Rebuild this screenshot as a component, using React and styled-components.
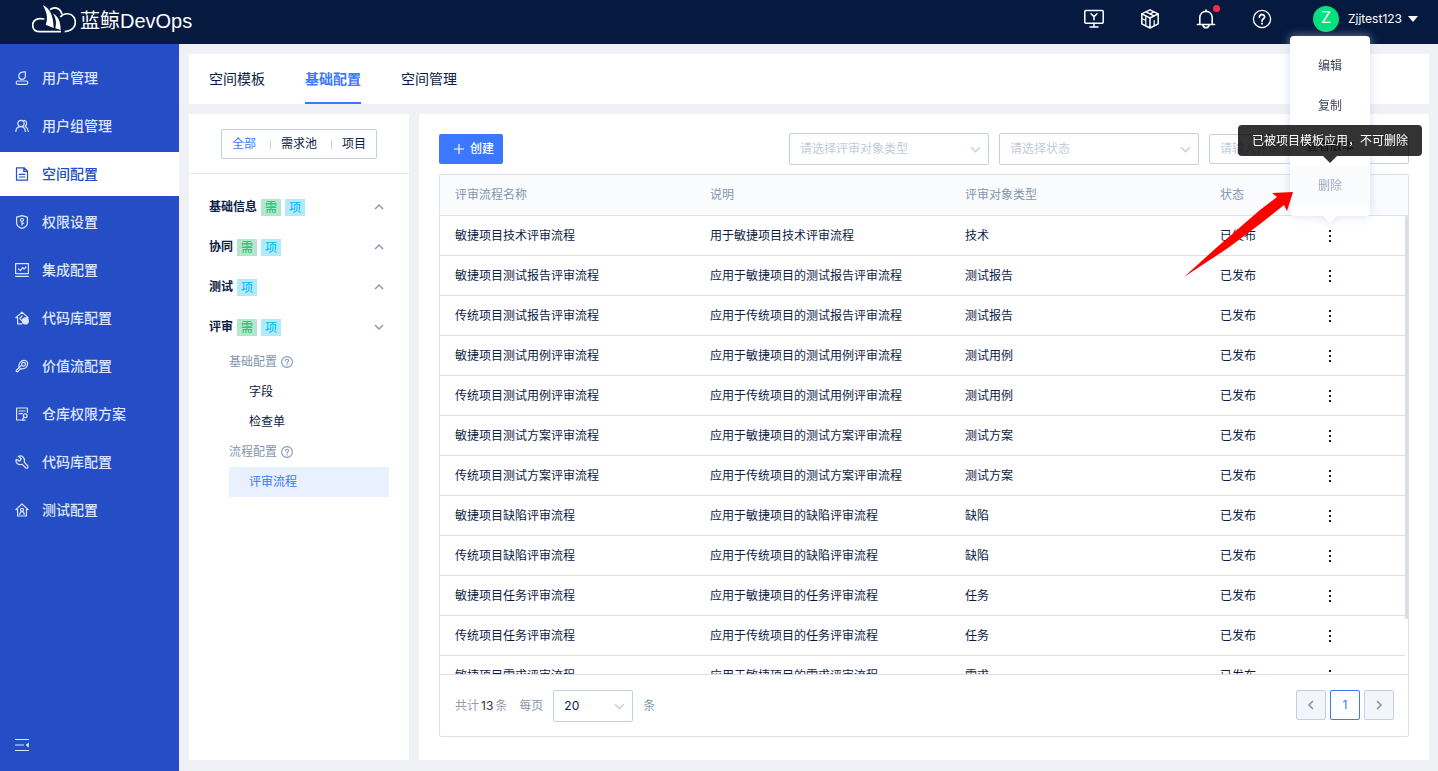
import React from "react";
import styled, { createGlobalStyle, css } from "styled-components";

const ink = "#0b1b45";
const blue = "#3c77ff";
const muted = "#8496ae";
const line = "#dde0e6";
const field = "#c4d0de";

const Global = createGlobalStyle`
  *, *::before, *::after { box-sizing: border-box; }
  body {
    margin: 0;
    font-family: Inter, "Noto Sans CJK SC", sans-serif;
    font-size: 12px;
    line-height: 18px;
    color: ${ink};
    background: #f0f1f5;
  }
  button, input, select { font: inherit; color: inherit; margin: 0; }
  button { border: 0; background: none; padding: 0; cursor: pointer; }
  ul { list-style: none; margin: 0; padding: 0; }
  a { color: inherit; text-decoration: none; }
  svg { display: block; flex: none; }
`;

/* ---------- shell ---------- */
const Shell = styled.div`
  position: relative;
  display: flex;
  flex-direction: column;
  height: 100vh;
  min-height: 480px;
`;
const Header = styled.header`
  display: flex;
  align-items: center;
  justify-content: space-between;
  flex: none;
  height: 44px;
  padding: 0 20px 6px 32px;
  background: #06193f;
  color: #fff;
`;
const Brand = styled.a`
  display: flex;
  align-items: center;
  gap: 4px;
`;
const BrandName = styled.span`
  padding-top: 4px;
  font-family: "Liberation Sans", "Noto Sans CJK SC", sans-serif;
  font-size: 20px;
  line-height: 28px;
`;
const HeaderTools = styled.div`
  display: flex;
  align-items: center;
  gap: 36px;
`;
const ToolButton = styled.button`
  position: relative;
  display: flex;
`;
const Dot = styled.span`
  position: absolute;
  top: -4px;
  right: -4px;
  width: 7px;
  height: 7px;
  border-radius: 50%;
  background: #fb2b44;
`;
const UserButton = styled.button`
  display: flex;
  align-items: center;
  gap: 6px;
  margin-left: 5px;
`;
const Avatar = styled.span`
  width: 26px;
  height: 26px;
  margin-right: 3px;
  border-radius: 50%;
  background: #04e07d;
  font-size: 16px;
  line-height: 23px;
  text-align: center;
`;
const Body = styled.div`
  display: flex;
  flex: 1;
  min-height: 0;
`;

/* ---------- sidebar ---------- */
const Sidebar = styled.nav`
  display: flex;
  flex-direction: column;
  justify-content: space-between;
  flex: none;
  width: 179px;
  padding: 12px 0 18px;
  background: #244dc6;
  color: #dce5fb;
`;
const NavList = styled.ul`
  display: flex;
  flex-direction: column;
  gap: 4px;
`;
const NavLink = styled.a`
  display: flex;
  align-items: center;
  gap: 12px;
  height: 44px;
  padding-left: 14px;
  font-size: 14px;
  font-weight: 500;
  ${(p) => p.$active && css`
    background: #fff;
    color: #244dc6;
  `}
`;
const CollapseButton = styled.button`
  align-self: flex-start;
  margin-left: 14px;
`;

/* ---------- main ---------- */
const Main = styled.main`
  display: flex;
  flex-direction: column;
  gap: 10px;
  flex: 1;
  min-width: 0;
  padding: 10px 9px 11px 10px;
`;
const Tabs = styled.nav`
  display: flex;
  gap: 40px;
  flex: none;
  height: 50px;
  padding: 0 20px;
  background: #fff;
`;
const Tab = styled.a`
  border-bottom: 2px solid ${(p) => (p.$active ? blue : "transparent")};
  color: ${(p) => (p.$active ? blue : ink)};
  font-size: 14px;
  font-weight: ${(p) => (p.$active ? 700 : 400)};
  line-height: 50px;
`;
const Columns = styled.div`
  display: flex;
  gap: 10px;
  flex: 1;
  min-height: 0;
`;
const TreePanel = styled.aside`
  flex: none;
  width: 220px;
  background: #fff;
`;
const ScopeBar = styled.div`
  display: flex;
  justify-content: center;
  height: 60px;
  padding-top: 15px;
  border-bottom: 1px solid #e8eaf0;
`;
const Segments = styled.div`
  display: flex;
  align-items: center;
  height: 30px;
  padding: 0 10px;
  border: 1px solid ${field};
  border-radius: 2px;
`;
const Segment = styled.button`
  display: flex;
  align-items: center;
  color: ${(p) => (p.$active ? blue : ink)};
  &:not(:first-child)::before {
    content: "";
    width: 1px;
    height: 9px;
    margin: 0 10px 0 14px;
    background: ${field};
  }
`;
const Tree = styled.div`
  padding-top: 13px;
`;
const GroupHead = styled.button`
  display: flex;
  align-items: center;
  gap: 4px;
  width: 100%;
  height: 40px;
  padding: 0 25px 0 20px;
  font-weight: 700;
  svg { margin-left: auto; }
`;
const Tag = styled.span`
  padding: 0 4px;
  font-weight: 400;
  line-height: 17px;
  background: ${(p) => (p.$kind === "需" ? "#b1e8cd" : "#b2eafb")};
  color: ${(p) => (p.$kind === "需" ? "#14bd68" : "#00b6ee")};
`;
const Branch = styled.div`
  margin: 0 20px 0 40px;
`;
const BranchTitle = styled.div`
  display: flex;
  align-items: center;
  gap: 4px;
  height: 30px;
  color: ${muted};
`;
const Leaf = styled.a`
  display: block;
  padding-left: 20px;
  line-height: 30px;
  ${(p) => p.$active && css`
    background: #e9f0ff;
    color: ${blue};
  `}
`;

/* ---------- list panel ---------- */
const ListPanel = styled.section`
  display: flex;
  flex-direction: column;
  gap: 9px;
  flex: 1;
  min-width: 0;
  padding: 19px 20px 23px;
  background: #fff;
`;
const Toolbar = styled.div`
  display: flex;
  align-items: center;
  gap: 10px;
`;
const CreateButton = styled.button`
  display: flex;
  align-items: center;
  gap: 6px;
  height: 30px;
  margin-right: auto;
  padding: 0 9px 0 15px;
  border-radius: 2px;
  background: ${blue};
  color: #fff;
  font-weight: 500;
`;
const SelectBox = styled.span`
  position: relative;
  width: ${(p) => p.$width};
  svg {
    position: absolute;
    top: 11px;
    right: 8px;
    pointer-events: none;
  }
`;
const Select = styled.select`
  display: block;
  width: 100%;
  height: 32px;
  padding: 0 10px;
  appearance: none;
  border: 1px solid ${field};
  border-radius: 2px;
  background: #fff;
  color: ${(p) => (p.$empty ? "#c0ccda" : ink)};
`;
const SearchBox = styled.label`
  display: flex;
  align-items: center;
  width: 200px;
  height: 30px;
  padding: 0 10px;
  border: 1px solid ${field};
  border-radius: 2px;
`;
const SearchInput = styled.input`
  flex: 1;
  min-width: 0;
  padding: 0;
  border: 0;
  outline: 0;
  background: none;
  &::placeholder { color: #c0ccda; }
`;
const TableCard = styled.div`
  display: flex;
  flex-direction: column;
  flex: 1;
  min-height: 0;
  border: 1px solid ${line};
  border-radius: 2px;
`;
const TableArea = styled.div`
  position: relative;
  flex: 1;
  min-height: 0;
`;
const TableScroll = styled.div`
  height: 100%;
  overflow-y: auto;
  scrollbar-width: none;
`;
const ScrollTrack = styled.div`
  position: absolute;
  top: 41px;
  right: 0;
  bottom: 0;
  width: 3px;
  background: #fff;
`;
const ScrollThumb = styled.div`
  height: 88%;
  border-radius: 1px;
  background: #d9dee5;
`;
const Table = styled.table`
  width: 100%;
  table-layout: fixed;
  border-collapse: separate;
  border-spacing: 0;
  text-align: left;
`;
const Th = styled.th`
  position: sticky;
  top: 0;
  width: ${(p) => p.$width};
  height: 41px;
  padding: 0 15px;
  border-bottom: 1px solid ${line};
  background: #fafbfd;
  color: ${muted};
  font-weight: 400;
`;
const Td = styled.td`
  height: 40px;
  padding: 0 15px;
  border-bottom: 1px solid ${line};
`;
const MoreButton = styled.button`
  display: flex;
  flex-direction: column;
  align-items: center;
  gap: 3px;
  width: 20px;
  i {
    width: 2px;
    height: 2px;
    background: ${ink};
  }
`;
const Pager = styled.footer`
  display: flex;
  align-items: flex-start;
  justify-content: space-between;
  height: 62px;
  padding: 15px 14px 0 15px;
  border-top: 1px solid ${line};
`;
const PageSize = styled.div`
  display: flex;
  align-items: center;
  gap: 10px;
  color: ${muted};
`;
const Total = styled.span`
  margin-right: 2px;
  color: #979bb0;
  b {
    margin: 0 2px;
    color: #333;
    font-weight: 400;
  }
`;
const Pages = styled.div`
  display: flex;
  gap: 4px;
`;
const PageButton = styled.button`
  display: flex;
  align-items: center;
  justify-content: center;
  width: 30px;
  height: 30px;
  border: 1px solid ${(p) => (p.$current ? blue : field)};
  border-radius: 2px;
  background: ${(p) => (p.$current ? "#fff" : "#f2f6fa")};
  color: ${(p) => (p.$current ? blue : muted)};
`;

/* ---------- overlays ---------- */
const Menu = styled.div`
  position: absolute;
  top: 36px;
  right: 68px;
  display: flex;
  flex-direction: column;
  width: 80px;
  padding: 10px 0;
  border-radius: 4px;
  background: #fff;
  filter: drop-shadow(0 0 5px rgba(190, 200, 220, 0.6));
  &::after {
    content: "";
    position: absolute;
    top: 100%;
    left: 33px;
    border: 7px solid transparent;
    border-top-color: #fff;
    border-bottom: 0;
  }
`;
const MenuItem = styled.button`
  height: 40px;
  color: #3f4658;
  &:disabled {
    background: #fafbfd;
    color: #a0adc0;
  }
`;
const Tooltip = styled.div`
  position: absolute;
  top: 125px;
  right: 16px;
  padding: 0 14px;
  border-radius: 4px;
  background: rgba(0, 0, 0, 0.8);
  color: #fff;
  line-height: 31px;
  white-space: nowrap;
  &::after {
    content: "";
    position: absolute;
    top: 100%;
    left: 85px;
    border: 7px solid transparent;
    border-top-color: rgba(0, 0, 0, 0.8);
    border-bottom: 0;
  }
`;
const Pointer = styled.svg`
  position: absolute;
  top: 190px;
  right: 144px;
`;

/* ---------- drawings ---------- */
const Icon = ({ size = 14, box = 14, w = 1, children }) => (
  <svg width={size} height={size} viewBox={`0 0 ${box} ${box}`} fill="none" stroke="currentColor"
    strokeWidth={w} strokeLinecap="round" strokeLinejoin="round" aria-hidden="true">
    {children}
  </svg>
);

const Logo = () => (
  <svg width="44" height="28" viewBox="96 14 132 84" fill="none" stroke="#fff" strokeWidth="5" aria-hidden="true">
    <path d="M183 94H120C105 94 98 85 98 74C98 61 110 51 133 56" />
    <path d="M150 28C160 20 180 19 186 42" strokeWidth="5" />
    <path d="M181 50C192 36 214 37 223 53C230 68 225 92 194 94" />
    <path d="M128 14C150 25 160 45 161 83L137 73C144 55 142 37 128 14Z" fill="#fff" stroke="none" />
    <path d="M158 39C175 48 182 64 182 89L166 84C170 67 168 53 158 39Z" fill="#fff" stroke="none" />
  </svg>
);

const Chevron = ({ dir = "down", size = 10, color = muted, w = 1.4 }) => {
  const d = {
    down: "M1 3L5 7L9 3",
    up: "M1 7L5 3L9 7",
    left: "M7 1L3 5L7 9",
    right: "M3 1L7 5L3 9",
  }[dir];
  return (
    <svg width={size} height={size} viewBox="0 0 10 10" fill="none" stroke={color} strokeWidth={w} aria-hidden="true">
      <path d={d} />
    </svg>
  );
};

const Help = ({ size = 12 }) => (
  <Icon size={size} box={20} w={size > 12 ? 1.3 : 1.8}>
    <circle cx="10" cy="10" r={size > 12 ? 8.6 : 9} />
    <path d="M7.4 8C7.4 4.6 12.8 4.8 12.6 8C12.5 9.8 10 9.8 10 12M10 14.3V14.8" strokeWidth="1.8" />
  </Icon>
);

const Monitor = () => (
  <Icon size={20} box={20} w={1.5}>
    <rect x="0.8" y="1.5" width="18.4" height="12.8" rx="1" />
    <path d="M10 14.3V18M6 18H14M7 4.8L10 7.6L13 4.8M10 7.6V10.8" />
  </Icon>
);
const Cube = () => (
  <Icon size={20} box={20} w={1.5}>
    <path d="M10 0.8L18.2 4.8V14.8L10 19L1.8 14.8V4.8ZM1.8 4.8L10 9L18.2 4.8M10 9V19M6 2.9L14 6.9M14 2.9L10 4.9" />
    <path d="M5.8 7V11.5M14.2 11.5V16.6M1.8 9.5L5.8 11.5V16.6" strokeWidth="1.2" />
  </Icon>
);
const Bell = () => (
  <Icon size={20} box={20} w={1.6}>
    <path d="M1.4 15.5H18.6M3.8 15.5V8.8C3.8 0.2 16.2 0.2 16.2 8.8V15.5M7 16C7.6 19.6 12.4 19.6 13 16M10 1V2.2" />
  </Icon>
);

const navIcons = {
  user: <><path d="M10.4 0.8C6 0.6 3.8 2.4 3.8 5C3.8 7.2 5.3 8.4 7 8.4C9.2 8.4 10.4 6.8 10.4 4.6Z" /><rect x="1.2" y="10" width="11.6" height="3.4" rx="1.7" /></>,
  group: <><circle cx="6" cy="4.5" r="3.2" /><path d="M0.8 12.5C1 9.5 3 7.7 6 7.7C8.5 7.7 10 9.5 10.4 12.5M9 1.4C12 1.6 12.5 5.5 10.2 7.2C12 8.4 13 10 13.4 12.5" /></>,
  file: <><path d="M1.5 0.8H9L12.5 4.2V13.2H1.5ZM8.8 0.8V4.4H12.5M4.2 7.3H9.8M4.2 10H9.8" /></>,
  shield: <><path d="M7 0.6L12.4 2.2V8C12.4 10.8 9.5 12.6 7 13.4C4.5 12.6 1.6 10.8 1.6 8V2.2Z" /><circle cx="7" cy="5" r="1.5" /><path d="M7 6.5V10.2M7 8.4H8.4" /></>,
  monitor: <><rect x="0.6" y="0.6" width="12.8" height="10" /><path d="M3.5 6L5.4 7.6L7.6 4.4L9 6L11 4M0.6 13.3H13.4" /></>,
  homeCode: <><path d="M7 12.8H2.6V6.6H0.8L7 1.2L13.2 6.6H11.6M7 5L4.8 7.5L6.8 9.6" /><circle cx="10.3" cy="9.9" r="3" fill="currentColor" /></>,
  rocket: <><path d="M4 8.6C3.2 4.6 6 1.4 9 1.4C12 1.4 13.2 3.8 12.4 6.2C11.4 9 8.4 10.4 5.6 9.6L2.6 12.8L1.2 12.4L1.4 11.2L5.8 7" /><circle cx="8.6" cy="5.2" r="1.9" /></>,
  docKey: <><path d="M12.4 5.5V1H1.6V13H6M4 4H10M4 6.6H7.4" /><circle cx="10.2" cy="8.8" r="1.9" /><path d="M9 10.4L7 13.2H10" /></>,
  wrench: <><path d="M3.2 1.3L6.2 3.8L4.6 6.1L1.2 4.3C0.2 8.4 3.8 10.5 7 9.2L10.8 13C12.2 13.8 13.6 12.3 12.8 11L9.2 7.2C10.5 3.2 7.2 0 3.2 1.3Z" /></>,
  homeUser: <><path d="M2.6 13V6.6H0.9L7 1L13.1 6.6H11.4V13Z" /><circle cx="7" cy="6.8" r="1.5" /><path d="M4.8 11.4C5 7.6 9 7.6 9.2 11.4" /></>,
};

/* ---------- data ---------- */
const navItems = [
  ["user", "用户管理"], ["group", "用户组管理"], ["file", "空间配置"], ["shield", "权限设置"], ["monitor", "集成配置"],
  ["homeCode", "代码库配置"], ["rocket", "价值流配置"], ["docKey", "仓库权限方案"], ["wrench", "代码库配置"], ["homeUser", "测试配置"],
];
const groups = [
  ["基础信息", ["需", "项"], "up"], ["协同", ["需", "项"], "up"], ["测试", ["项"], "up"], ["评审", ["需", "项"], "down"],
];
const rows = [
  ["敏捷项目技术评审流程", "用于敏捷项目技术评审流程", "技术"],
  ["敏捷项目测试报告评审流程", "应用于敏捷项目的测试报告评审流程", "测试报告"],
  ["传统项目测试报告评审流程", "应用于传统项目的测试报告评审流程", "测试报告"],
  ["敏捷项目测试用例评审流程", "应用于敏捷项目的测试用例评审流程", "测试用例"],
  ["传统项目测试用例评审流程", "应用于传统项目的测试用例评审流程", "测试用例"],
  ["敏捷项目测试方案评审流程", "应用于敏捷项目的测试方案评审流程", "测试方案"],
  ["传统项目测试方案评审流程", "应用于传统项目的测试方案评审流程", "测试方案"],
  ["敏捷项目缺陷评审流程", "应用于敏捷项目的缺陷评审流程", "缺陷"],
  ["传统项目缺陷评审流程", "应用于传统项目的缺陷评审流程", "缺陷"],
  ["敏捷项目任务评审流程", "应用于敏捷项目的任务评审流程", "任务"],
  ["传统项目任务评审流程", "应用于传统项目的任务评审流程", "任务"],
  ["敏捷项目需求评审流程", "应用于敏捷项目的需求评审流程", "需求"],
  ["传统项目需求评审流程", "应用于传统项目的需求评审流程", "需求"],
];

const Dropdown = ({ label, width = "200px", empty }) => (
  <SelectBox $width={width}>
    <Select $empty={empty} aria-label={empty ? label : "每页条数"}>
      <option>{label}</option>
    </Select>
    <Chevron color={field} size={11} />
  </SelectBox>
);

export default function App() {
  return (
    <Shell>
      <Global />
      <Header>
        <Brand href="#"><Logo /><BrandName>蓝鲸DevOps</BrandName></Brand>
        <HeaderTools>
          <ToolButton aria-label="工作台"><Monitor /></ToolButton>
          <ToolButton aria-label="应用"><Cube /></ToolButton>
          <ToolButton aria-label="通知"><Bell /><Dot /></ToolButton>
          <ToolButton aria-label="帮助"><Help size={20} /></ToolButton>
          <UserButton>
            <Avatar>Z</Avatar>
            Zjjtest123
            <svg width="10" height="6" viewBox="0 0 10 6" fill="#fff" aria-hidden="true"><path d="M0 0H10L5 6Z" /></svg>
          </UserButton>
        </HeaderTools>
      </Header>

      <Body>
        <Sidebar>
          <NavList>
            {navItems.map(([icon, label], i) => (
              <li key={i}>
                <NavLink href="#" $active={i === 2}>
                  <Icon size={16} box={16} w={1.2}><g transform="translate(1 1)">{navIcons[icon]}</g></Icon>
                  {label}
                </NavLink>
              </li>
            ))}
          </NavList>
          <CollapseButton aria-label="收起导航">
            <Icon size={16} box={16} w={1.2}>
              <path d="M1.5 2.5H14.5M1.5 8H9.5M1.5 13.5H14.5" />
              <path d="M14.8 5.4V10.6L11.6 8Z" fill="currentColor" stroke="none" />
            </Icon>
          </CollapseButton>
        </Sidebar>

        <Main>
          <Tabs>
            <Tab href="#">空间模板</Tab>
            <Tab href="#" $active>基础配置</Tab>
            <Tab href="#">空间管理</Tab>
          </Tabs>
          <Columns>
            <TreePanel>
              <ScopeBar>
                <Segments>
                  <Segment $active>全部</Segment>
                  <Segment>需求池</Segment>
                  <Segment>项目</Segment>
                </Segments>
              </ScopeBar>
              <Tree>
                {groups.map(([name, tags, dir]) => (
                  <GroupHead key={name}>
                    {name}
                    {tags.map((t) => <Tag key={t} $kind={t}>{t}</Tag>)}
                    <Chevron dir={dir} />
                  </GroupHead>
                ))}
                <Branch>
                  <BranchTitle>基础配置<Help /></BranchTitle>
                  <Leaf href="#">字段</Leaf>
                  <Leaf href="#">检查单</Leaf>
                  <BranchTitle>流程配置<Help /></BranchTitle>
                  <Leaf href="#" $active>评审流程</Leaf>
                </Branch>
              </Tree>
            </TreePanel>

            <ListPanel>
              <Toolbar>
                <CreateButton>
                  <svg width="10" height="10" viewBox="0 0 10 10" stroke="#fff" strokeWidth="1.2" aria-hidden="true"><path d="M5 0V10M0 5H10" /></svg>
                  创建
                </CreateButton>
                <Dropdown empty label="请选择评审对象类型" />
                <Dropdown empty label="请选择状态" />
                <SearchBox>
                  <SearchInput aria-label="搜索" placeholder="请输入评审流程名称" />
                  <svg width="14" height="14" viewBox="0 0 14 14" fill="none" stroke={field} aria-hidden="true">
                    <circle cx="6" cy="6" r="5" /><path d="M9.6 9.6L13 13" />
                  </svg>
                </SearchBox>
              </Toolbar>

              <TableCard>
                <TableArea>
                  <TableScroll>
                    <Table>
                      <thead>
                        <tr>
                          <Th>评审流程名称</Th>
                          <Th>说明</Th>
                          <Th>评审对象类型</Th>
                          <Th $width="100px">状态</Th>
                          <Th $width="103px" aria-label="操作" />
                        </tr>
                      </thead>
                      <tbody>
                        {rows.map(([name, desc, type]) => (
                          <tr key={name}>
                            <Td>{name}</Td>
                            <Td>{desc}</Td>
                            <Td>{type}</Td>
                            <Td>已发布</Td>
                            <Td><MoreButton aria-label="更多"><i /><i /><i /></MoreButton></Td>
                          </tr>
                        ))}
                      </tbody>
                    </Table>
                  </TableScroll>
                  <ScrollTrack><ScrollThumb /></ScrollTrack>
                </TableArea>
                <Pager>
                  <PageSize>
                    <Total>共计<b>13</b>条</Total>
                    每页
                    <Dropdown width="80px" label="20" />
                    条
                  </PageSize>
                  <Pages>
                    <PageButton aria-label="上一页"><Chevron dir="left" w={1.6} /></PageButton>
                    <PageButton $current>1</PageButton>
                    <PageButton aria-label="下一页"><Chevron dir="right" w={1.6} /></PageButton>
                  </Pages>
                </Pager>
              </TableCard>
            </ListPanel>
          </Columns>
        </Main>
      </Body>

      <Menu>
        <MenuItem>编辑</MenuItem>
        <MenuItem>复制</MenuItem>
        <MenuItem>查看版本</MenuItem>
        <MenuItem disabled>删除</MenuItem>
      </Menu>
      <Tooltip role="tooltip">已被项目模板应用，不可删除</Tooltip>
      <Pointer width="110" height="90" viewBox="0 0 110 90" fill="#f00" aria-hidden="true">
        <path d="M0 87L32 58L76 20L93 7L88 3L109 2L103 21L100 15L76 34L44 58Z" />
      </Pointer>
    </Shell>
  );
}
